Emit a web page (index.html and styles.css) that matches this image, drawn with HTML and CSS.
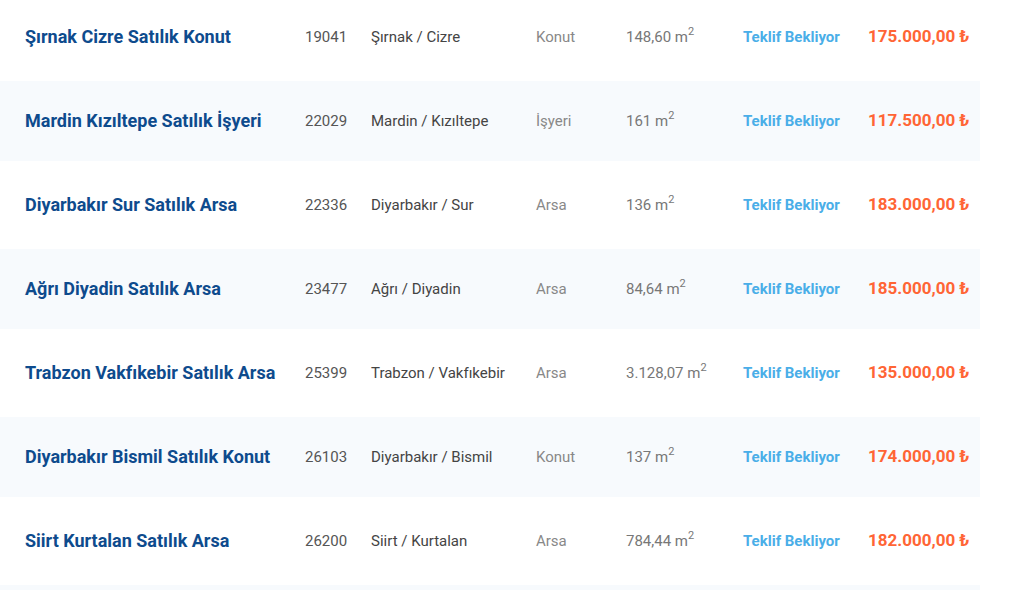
FILE: index.html
```html
<!DOCTYPE html>
<html lang="tr">
<head>
<meta charset="utf-8">
<title>İlanlar</title>
<link rel="stylesheet" href="styles.css">
</head>
<body>
<div class="list">
  <div class="row">
    <a class="title">Şırnak Cizre Satılık Konut</a>
    <span class="code">19041</span>
    <span class="loc">Şırnak / Cizre</span>
    <span class="type">Konut</span>
    <span class="area">148,60 m<sup>2</sup></span>
    <span class="status">Teklif Bekliyor</span>
    <span class="price">175.000,00 ₺</span>
  </div>
  <div class="row alt">
    <a class="title">Mardin Kızıltepe Satılık İşyeri</a>
    <span class="code">22029</span>
    <span class="loc">Mardin / Kızıltepe</span>
    <span class="type">İşyeri</span>
    <span class="area">161 m<sup>2</sup></span>
    <span class="status">Teklif Bekliyor</span>
    <span class="price">117.500,00 ₺</span>
  </div>
  <div class="row">
    <a class="title">Diyarbakır Sur Satılık Arsa</a>
    <span class="code">22336</span>
    <span class="loc">Diyarbakır / Sur</span>
    <span class="type">Arsa</span>
    <span class="area">136 m<sup>2</sup></span>
    <span class="status">Teklif Bekliyor</span>
    <span class="price">183.000,00 ₺</span>
  </div>
  <div class="row alt">
    <a class="title">Ağrı Diyadin Satılık Arsa</a>
    <span class="code">23477</span>
    <span class="loc">Ağrı / Diyadin</span>
    <span class="type">Arsa</span>
    <span class="area">84,64 m<sup>2</sup></span>
    <span class="status">Teklif Bekliyor</span>
    <span class="price">185.000,00 ₺</span>
  </div>
  <div class="row">
    <a class="title">Trabzon Vakfıkebir Satılık Arsa</a>
    <span class="code">25399</span>
    <span class="loc">Trabzon / Vakfıkebir</span>
    <span class="type">Arsa</span>
    <span class="area">3.128,07 m<sup>2</sup></span>
    <span class="status">Teklif Bekliyor</span>
    <span class="price">135.000,00 ₺</span>
  </div>
  <div class="row alt">
    <a class="title">Diyarbakır Bismil Satılık Konut</a>
    <span class="code">26103</span>
    <span class="loc">Diyarbakır / Bismil</span>
    <span class="type">Konut</span>
    <span class="area">137 m<sup>2</sup></span>
    <span class="status">Teklif Bekliyor</span>
    <span class="price">174.000,00 ₺</span>
  </div>
  <div class="row">
    <a class="title">Siirt Kurtalan Satılık Arsa</a>
    <span class="code">26200</span>
    <span class="loc">Siirt / Kurtalan</span>
    <span class="type">Arsa</span>
    <span class="area">784,44 m<sup>2</sup></span>
    <span class="status">Teklif Bekliyor</span>
    <span class="price">182.000,00 ₺</span>
  </div>
  <div class="row alt"></div>
</div>
</body>
</html>
```

FILE: styles.css
```css
html, body {
  margin: 0;
  padding: 0;
  background: #ffffff;
}
body {
  font-family: Roboto, "Liberation Sans", Arial, sans-serif;
  overflow: hidden;
}
.list {
  width: 980px;
  margin-top: -3px;
  display: flex;
  flex-direction: column;
  gap: 4px;
}
.row {
  height: 80px;
  display: grid;
  grid-template-columns: 280px 66px 165px 90px 117px 125px 1fr;
  align-items: center;
  padding-left: 25px;
  box-sizing: border-box;
  background: #ffffff;
}
.row.alt {
  background: #f7fafd;
}
.title {
  font-size: 18px;
  font-weight: 700;
  color: #0e4b8d;
  white-space: nowrap;
  margin-bottom: 2px;
}
.code {
  font-size: 15px;
  color: #555555;
}
.loc {
  font-size: 15px;
  color: #444444;
}
.type {
  font-size: 15px;
  color: #888888;
}
.area {
  font-size: 15px;
  color: #777777;
}
.area sup {
  font-size: 11px;
  line-height: 0;
  vertical-align: 7px;
}
.status {
  font-size: 15px;
  font-weight: 700;
  color: #4aaee8;
}
.price {
  font-size: 17px;
  font-weight: 700;
  color: #ff6535;
  white-space: nowrap;
  margin-bottom: 2px;
}
```
